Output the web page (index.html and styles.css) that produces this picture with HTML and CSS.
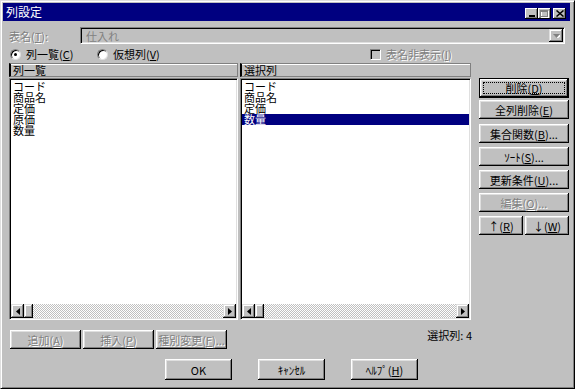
FILE: index.html
```html
<!DOCTYPE html>
<html lang="ja">
<head>
    <meta charset="UTF-8">
    <title>列設定</title>
    <link rel="stylesheet" href="styles.css">
</head>
<body>

    <div class="window">
        <div class="titlebar">
            <span class="title">列設定</span>
            <div class="title-buttons">
                <span class="tbtn"><svg width="8" height="7" viewBox="0 0 8 7"><rect x="1" y="5" width="6" height="2" fill="#000"/></svg></span>
                <span class="tbtn"><svg width="9" height="8" viewBox="0 0 9 8"><rect x="1.5" y="1.5" width="7" height="6" fill="none" stroke="#fff"/><rect x="0.5" y="0.5" width="7" height="6" fill="none" stroke="#808080"/><line x1="0" y1="1.5" x2="8" y2="1.5" stroke="#808080"/></svg></span>
                <span class="tbtn close"><svg width="8" height="7" viewBox="0 0 8 7"><path d="M0.5 0.5l7 6M7.5 0.5l-7 6" stroke="#000" stroke-width="1.5"/></svg></span>
            </div>
        </div>

        <div class="content">
            <div class="table-row">
                <span class="field-label disabled">表名(<u>T</u>):</span>
                <div class="combo">
                    <span class="combo-text">仕入れ</span>
                    <span class="combo-btn"><svg width="7" height="4" viewBox="0 0 7 4"><path d="M1 1h7l-3.5 4z" fill="#fff"/><path d="M0 0h7l-3.5 4z" fill="#808080"/></svg></span>
                </div>
            </div>

            <div class="options-row">
                <span class="option first"><span class="radio checked"></span><span>列一覧(<u>C</u>)</span></span>
                <span class="option second"><span class="radio"></span><span>仮想列(<u>V</u>)</span></span>
                <span class="option disabled"><span class="checkbox"></span><span>表名非表示(<u>I</u>)</span></span>
            </div>

            <div class="main">
                <div class="pane left">
                    <div class="pane-header">列一覧</div>
                    <div class="listbox">
                        <ul class="items">
                            <li>コード</li>
                            <li>商品名</li>
                            <li>定価</li>
                            <li>原価</li>
                            <li>数量</li>
                        </ul>
                        <div class="hscroll">
                            <span class="sb-btn"><svg width="4" height="7" viewBox="0 0 4 7"><path d="M4 0v7L0 3.5z" fill="#000"/></svg></span>
                            <span class="thumb"></span>
                            <span class="track"></span>
                            <span class="sb-btn"><svg width="4" height="7" viewBox="0 0 4 7"><path d="M0 0v7l4-3.5z" fill="#000"/></svg></span>
                        </div>
                    </div>
                </div>

                <div class="pane right">
                    <div class="pane-header">選択列</div>
                    <div class="listbox">
                        <ul class="items">
                            <li>コード</li>
                            <li>商品名</li>
                            <li>定価</li>
                            <li class="selected">数量</li>
                        </ul>
                        <div class="hscroll">
                            <span class="sb-btn"><svg width="4" height="7" viewBox="0 0 4 7"><path d="M4 0v7L0 3.5z" fill="#000"/></svg></span>
                            <span class="thumb"></span>
                            <span class="track"></span>
                            <span class="sb-btn"><svg width="4" height="7" viewBox="0 0 4 7"><path d="M0 0v7l4-3.5z" fill="#000"/></svg></span>
                        </div>
                    </div>
                </div>

                <div class="side-buttons">
                    <button class="btn default"><span class="focus">削除(<u>D</u>)</span></button>
                    <button class="btn">全列削除(<u>E</u>)</button>
                    <button class="btn spaced">集合関数(<u>B</u>)...</button>
                    <button class="btn">ｿｰﾄ(<u>S</u>)...</button>
                    <button class="btn">更新条件(<u>U</u>)...</button>
                    <button class="btn" disabled>編集(<u>O</u>)...</button>
                    <div class="arrow-buttons">
                        <button class="btn">↑(<u>R</u>)</button>
                        <button class="btn">↓(<u>W</u>)</button>
                    </div>
                </div>
            </div>

            <div class="action-row">
                <div class="group-buttons">
                    <button class="btn" disabled>追加(<u>A</u>)</button>
                    <button class="btn" disabled>挿入(<u>P</u>)</button>
                    <button class="btn" disabled>種別変更(<u>F</u>)...</button>
                </div>
                <span class="count">選択列: 4</span>
            </div>

            <div class="dialog-buttons">
                <button class="btn">OK</button>
                <button class="btn">ｷｬﾝｾﾙ</button>
                <button class="btn">ﾍﾙﾌﾟ(<u>H</u>)</button>
            </div>
        </div>
    </div>

</body>
</html>
```

FILE: styles.css
```css
body {
    margin: 0;
    font-family: "Noto Sans CJK JP", "Liberation Sans", sans-serif;
    font-size: 11px;
    background-color: #c0c0c0;
    color: #000;
}
u {
    text-decoration-thickness: 1px;
    text-underline-offset: 1px;
}
.window {
    box-sizing: border-box;
    width: 575px;
    height: 389px;
    border: 1px solid;
    border-color: #dfdfdf #000 #000 #dfdfdf;
    box-shadow: inset 1px 1px #fff, inset -1px -1px #808080;
    padding: 2px 4px 2px 2px;
    background: #c0c0c0;
}
.titlebar {
    display: flex;
    align-items: center;
    height: 18px;
    padding: 0 4px 0 3px;
    background: #000080;
    color: #fff;
}
.title {
    font-size: 12px;
    line-height: 18px;
}
.title-buttons {
    display: flex;
    margin-left: auto;
    align-self: flex-end;
    margin-bottom: 2px;
}
.tbtn {
    display: flex;
    align-items: center;
    justify-content: center;
    width: 13px;
    height: 11px;
    background: #c0c0c0;
    box-shadow: inset -1px -1px #000, inset 1px 1px #fff, inset -2px -2px #808080;
}
.tbtn.close {
    margin-left: 2px;
}

.content {
    padding-left: 6px;
}
.disabled, .btn:disabled {
    color: #808080;
    text-shadow: 1px 1px 0 #fff;
}

/* 表名 */
.table-row {
    display: flex;
    align-items: center;
    height: 17px;
    margin-top: 6px;
}
.field-label {
    width: 71px;
}
.combo {
    box-sizing: border-box;
    display: flex;
    align-items: center;
    width: 485px;
    height: 17px;
    border: 1px solid;
    border-color: #808080 #fff #fff #808080;
    box-shadow: inset 1px 1px #000, inset -1px -1px #dfdfdf;
    padding: 0 1px 0 5px;
}
.combo-text {
    color: #808080;
}
.combo-btn {
    display: flex;
    align-items: center;
    justify-content: center;
    margin-left: auto;
    width: 14px;
    height: 13px;
    box-shadow: inset -1px -1px #000, inset 1px 1px #dfdfdf, inset -2px -2px #808080, inset 2px 2px #fff;
}

/* radio / checkbox */
.options-row {
    display: flex;
    align-items: center;
    height: 12px;
    margin-top: 4px;
}
.option {
    display: flex;
    align-items: center;
    gap: 5px;
}
.option.first {
    margin-left: 1px;
    width: 87px;
}
.option.second {
    width: 273px;
}
.radio {
    position: relative;
    box-sizing: border-box;
    width: 11px;
    height: 11px;
    border-radius: 50%;
    background: #fff;
    border: 1px solid;
    border-color: #808080 #dfdfdf #dfdfdf #808080;
    box-shadow: inset 1px 1px #000;
}
.radio.checked::after {
    content: "";
    position: absolute;
    left: 3px;
    top: 3px;
    width: 3px;
    height: 3px;
    border-radius: 50%;
    background: #000;
}
.checkbox {
    box-sizing: border-box;
    width: 11px;
    height: 11px;
    background: #c0c0c0;
    border: 1px solid;
    border-color: #808080 #fff #fff #808080;
    box-shadow: inset 1px 1px #000;
}

/* lists */
.main {
    display: flex;
    margin-top: 3px;
}
.pane {
    display: flex;
    flex-direction: column;
    gap: 1px;
}
.pane.left {
    width: 229px;
}
.pane.right {
    width: 231px;
    margin-left: 2px;
}
.pane-header {
    box-sizing: border-box;
    height: 14px;
    line-height: 12px;
    padding-left: 2px;
    border: 1px solid #808080;
    border-left: 2px solid #000;
    box-shadow: inset 0 1px #fff;
}
.listbox {
    box-sizing: border-box;
    display: flex;
    flex-direction: column;
    height: 242px;
    background: #fff;
    border: 1px solid;
    border-color: #808080 #fff #fff #808080;
    box-shadow: inset 1px 1px #000, inset -1px -1px #dfdfdf;
    padding: 1px;
}
.items {
    flex: 1;
    list-style: none;
    margin: 0;
    padding: 1px 0 0 0;
}
.items li {
    height: 11px;
    line-height: 11px;
    padding-left: 2px;
}
.items li.selected {
    background: #000080;
    color: #fff;
}
.hscroll {
    display: flex;
    height: 14px;
}
.sb-btn {
    display: flex;
    align-items: center;
    justify-content: center;
    width: 13px;
    background: #c0c0c0;
    box-shadow: inset -1px -1px #000, inset 1px 1px #dfdfdf, inset -2px -2px #808080, inset 2px 2px #fff;
}
.thumb {
    width: 9px;
    background: #c0c0c0;
    box-shadow: inset -1px -1px #000, inset 1px 1px #dfdfdf, inset -2px -2px #808080, inset 2px 2px #fff;
}
.track {
    flex: 1;
    background: repeating-conic-gradient(#c0c0c0 0 25%, #fff 0 50%) 0 0 / 2px 2px;
}

/* buttons */
.btn {
    box-sizing: border-box;
    display: flex;
    align-items: center;
    justify-content: center;
    height: 19px;
    padding: 0;
    border: none;
    background: #c0c0c0;
    font-family: inherit;
    font-size: 11px;
    color: #000;
    box-shadow: inset -1px -1px #000, inset 1px 1px #fff, inset -2px -2px #808080, inset 2px 2px #dfdfdf;
}
.btn.default {
    height: 20px;
    box-shadow: inset 0 0 0 1px #000, inset -2px -2px #000, inset 2px 2px #fff, inset -3px -3px #808080, inset 3px 3px #dfdfdf;
}
.focus {
    flex: 1;
    align-self: stretch;
    margin: 4px;
    border: 1px dotted #000;
    display: flex;
    align-items: center;
    justify-content: center;
}
.side-buttons {
    display: flex;
    flex-direction: column;
    gap: 4px;
    width: 90px;
    margin-left: 8px;
    padding-top: 15px;
}
.side-buttons .default {
    margin-bottom: -2px;
}
.side-buttons .spaced {
    margin-top: 1px;
}
.arrow-buttons {
    display: flex;
    gap: 2px;
}
.arrow-buttons .btn {
    flex: 1;
}

.action-row {
    display: flex;
    align-items: flex-start;
    width: 463px;
    margin-top: 10px;
}
.group-buttons {
    display: flex;
    gap: 2px;
    margin-left: 1px;
}
.group-buttons .btn {
    width: 71px;
}
.count {
    margin-left: auto;
    margin-top: -3px;
}

.dialog-buttons {
    display: flex;
    gap: 26px;
    margin-top: 10px;
    padding-left: 156px;
}
.dialog-buttons .btn {
    width: 67px;
    height: 21px;
}
```
